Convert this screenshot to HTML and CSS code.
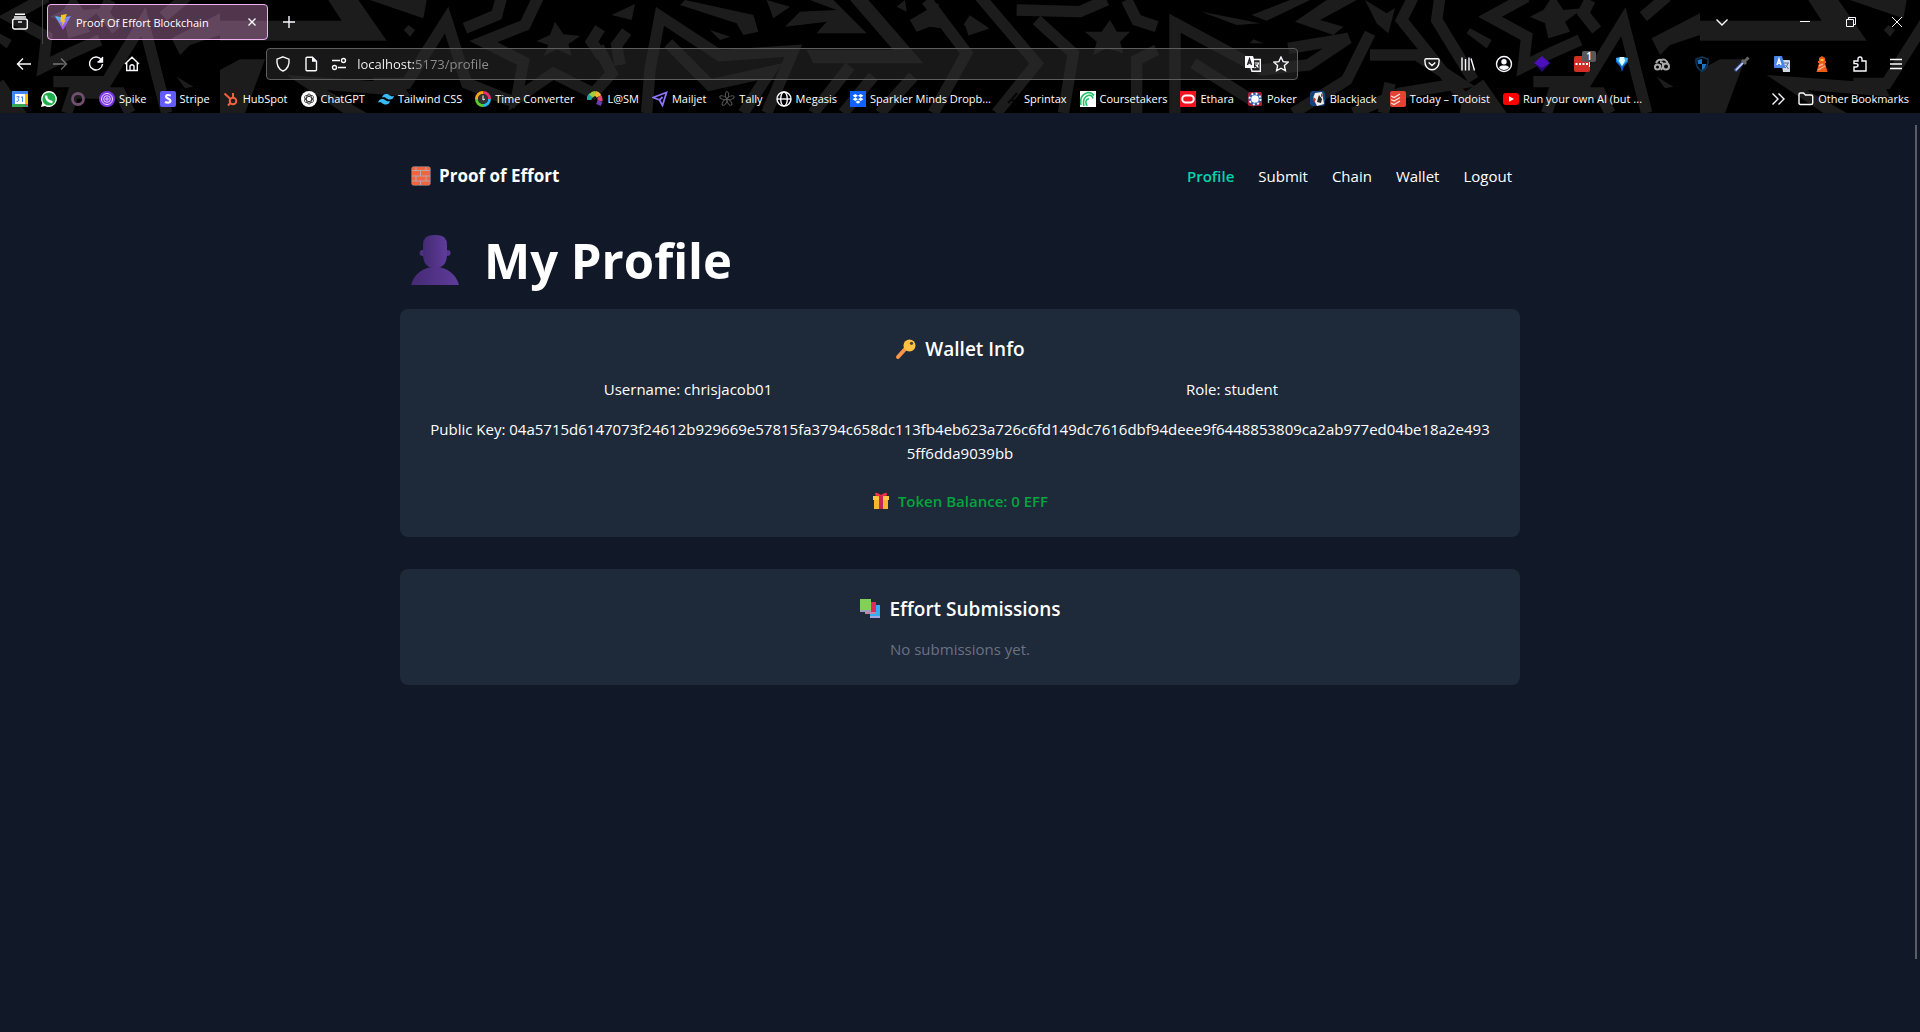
FILE: index.html
```html
<!DOCTYPE html>
<html lang="en">
<head>
<meta charset="utf-8">
<title>Proof Of Effort Blockchain</title>
<link rel="stylesheet" href="styles.css">
</head>
<body>
<div class="browser">
  <svg class="theme" viewBox="0 0 5760 339" preserveAspectRatio="xMinYMin slice" aria-hidden="true">
    <defs>
      <pattern id="stars" x="660" y="0" width="4440" height="600" patternUnits="userSpaceOnUse">
        <g transform="translate(-660 0)" fill="#1c1c1c">
          <path d="M985 0h90l85 122H660V62h365zM1110 0h170l-10 55zM1225 75l20 15-15 20-18-20zM660 210l60-32h75l-60 161h-75zM860 225l350 25 20 40-250-20 120 69h-70zM1835 45l70-33-10 48z"/>
          <path d="M1665 65l25 38 50 5-35 25 10 35-45-20-38 20 13-33-35-12 40-18z"/>
          <path d="M2055 0l205 45 15 50-45 10-20-35-170-55zM2130 90l60 20-30 10zM2300 0l70 20-50 35zM2355 80l45-45 110-5-80-30h70l100 100h-150l30-35zM2550 0h55l165 190h-330l-20-40h260zM2690 20l25-20 5 35zM2730 60l85-50 10 75-35-5-40 15z"/>
          <path d="M3330 60l20 35h40l-30 30 10 35-50-15-40 20 10-40-35-30h50zM3605 35l175 35-70 5zM3755 45L3870 0h60l-130 62zM3885 65l95-65h90l-110 60 70 20-30 25zM3750 130l10-12 30 12zM4095 0l65 40 25-15-20 75-35-30z"/>
          <path d="M4660-15l30 45 60-5-55 40 15 30-65 20-10-45-45-20 40-20zM4410 85l65 35-15 25-60-45zM4955 115L5100 40v65l-90 30-30 30zM4970 230l50 30-25 5zM4380 339l10-60 60-40 70 100z"/>
          <g fill="none" stroke="#1c1c1c" stroke-width="34">
            <path d="M1120 250h100L1340 60l60 190 150 60M1395 85l95-40 15-55M1620-20l-45 95-125 50 120 60-20 110 110-75 120 60 55-60-40-80"/>
            <path d="M1800 85l-25 40 30 45M1880 95l-30 40 10 60M1940 339l10-130 30-160 180 118 220-15-80 187M2005 130l125 125 180-40-80 124"/>
            <path d="M2440 339l110-140M2530 339l90-110M2640 339l100-110M2800 339l100-180L2780 0M2900 60l30 20-30 10M2940-10l170 200-120 149"/>
            <path d="M3050 30l190 5 80-35M3110 60l110 100-30 179M3380 0l30 60 60 20M3410 339V180l60-30"/>
            <path d="M3525 339V70l260 140 140-15 120-80-180 30M3580 190l190 120M4110 100l-70 140-160 99M4110 165l140 0 130 85-180 30-140 59M4170 250l-20 89"/>
            <path d="M4240-10l-35 70 80 100 140 179M4320-10l-10 70 110 180M4580-10l-110 60 110 60-10 90 80-40 90-40M4770 0l-20 40 40 50M4600 245h160L4870 65l70 274M4640 339l20-60h140l30 60M5000-10l-70 60"/>
          </g>
        </g>
      </pattern>
    </defs>
    <rect width="5760" height="339" fill="url(#stars)"/>
  </svg>

  <div class="tabs">
    <button class="tool view" aria-label="Firefox View"><svg width="18" height="18" viewBox="0 0 18 18"><path d="M4 1.200h10M3 4h12"/><rect x="1.700" y="6" width="14.600" height="10" rx="2"/><path d="M7 9h4"/></svg></button>
    <div class="tab">
      <svg width="16" height="16" viewBox="0 0 16 16"><defs><linearGradient id="v" x2=".6" y2="1"><stop stop-color="#41d1ff"/><stop offset="1" stop-color="#bd34fe"/></linearGradient></defs><path class="f" d="M0 2l8 14 8-14-8 1.500z" fill="url(#v)"/><path class="f" d="M12 0L6 1l-.5 7 2-.3L7 12l4-6-2 .4z" fill="#ffc31f"/></svg>
      <span class="title">Proof Of Effort Blockchain</span>
      <button class="close" aria-label="Close tab"><svg width="10" height="10" viewBox="0 0 10 10"><path d="M1.500 1.500l7 7M8.500 1.500l-7 7"/></svg></button>
    </div>
    <button class="tool" aria-label="New tab"><svg width="14" height="14" viewBox="0 0 14 14"><path d="M7 1v12M1 7h12"/></svg></button>
    <button class="tool all" aria-label="List all tabs"><svg width="14" height="14" viewBox="0 0 14 14"><path d="M1.500 4.500L7 10l5.500-5.500"/></svg></button>
    <button class="win" aria-label="Minimize"><svg width="12" height="12" viewBox="0 0 12 12"><path d="M1 5.500h10"/></svg></button>
    <button class="win" aria-label="Restore"><svg width="12" height="12" viewBox="0 0 12 12"><path d="M1.500 3.500h7v7h-7zM3.500 3V1.500h7v7H9"/></svg></button>
    <button class="win" aria-label="Close"><svg width="12" height="12" viewBox="0 0 12 12"><path d="M1 1l10 10M11 1L1 11"/></svg></button>
  </div>

  <div class="toolbar">
    <button class="tool" aria-label="Back"><svg width="16" height="16" viewBox="0 0 16 16"><path d="M15 8H1.500M7 2.500L1.500 8 7 13.500"/></svg></button>
    <button class="tool dim" aria-label="Forward"><svg width="16" height="16" viewBox="0 0 16 16"><path d="M1 8h13.500M9 2.500L14.500 8 9 13.500"/></svg></button>
    <button class="tool" aria-label="Reload"><svg width="16" height="16" viewBox="0 0 16 16"><path d="M13.500 4A6.500 6.500 0 1 0 14.500 8M14.500 1v5h-5"/><path class="solid" d="M15 .5V6H9.500z"/></svg></button>
    <button class="tool" aria-label="Home"><svg width="16" height="16" viewBox="0 0 16 16"><path d="M1 8l7-6.800L15 8M2.700 7v7.500h10.600V7M6 14.500V10q2-2.400 4 0v4.500"/></svg></button>
    <div class="spring"></div>
    <div class="address">
      <svg width="16" height="16" viewBox="0 0 16 16"><path d="M8 .8l6 2.400c.5 5-1.500 9.800-6 12-4.500-2.200-6.500-7-6-12z"/></svg>
      <svg width="16" height="16" viewBox="0 0 16 16"><path d="M9.500 1.200H4a1 1 0 0 0-1 1v11.600a1 1 0 0 0 1 1h8.500a1 1 0 0 0 1-1V5.200z"/><path class="solid" d="M9 .8l5 5H9z"/></svg>
      <svg width="16" height="16" viewBox="0 0 16 16"><path d="M1 4.500h8M7 11.500h8"/><circle cx="12.500" cy="4.500" r="2"/><circle cx="3.500" cy="11.500" r="2"/></svg>
      <input class="url" type="text" aria-label="Address" value="localhost:5173/profile">
      <button class="mini" aria-label="Translate page"><svg width="16" height="16" viewBox="0 0 16 16"><path class="solid" d="M0 0h8l1 3v9H0z"/><path d="M9 3.500h6.300v11.800H7L6 12"/><path d="M2.500 9l2-6 2 6M3 7h3" stroke="#222"/><path d="M9.500 7h4q-.5 3-4 5M10.500 8.500l3 3" stroke-width="1.200"/></svg></button>
      <button class="mini" aria-label="Bookmark this page"><svg width="16" height="16" viewBox="0 0 16 16"><path d="M8 1l2.100 4.600 5 .6-3.700 3.400 1 5L8 12.200l-4.400 2.400 1-5L.9 6.200l5-.6z"/></svg></button>
    </div>
    <div class="spring"></div>
    <button class="tool" aria-label="Pocket"><svg width="16" height="16" viewBox="0 0 16 16"><path d="M2.500 2.700h11q1.700 0 1.700 1.700C15.200 10 12.500 13.800 8 13.800S.8 10 .8 4.400q0-1.700 1.700-1.700zM4.700 6.500L8 9.500l3.300-3"/></svg></button>
    <button class="tool" aria-label="Library"><svg width="16" height="16" viewBox="0 0 16 16"><path d="M2 1.500v13M5.500 3v11.500M9 1.500v13M11 2.500l3.500 12"/></svg></button>
    <button class="tool" aria-label="Account"><svg width="18" height="18" viewBox="0 0 18 18"><circle cx="9" cy="9" r="7.500" /><circle class="solid" cx="9" cy="6.800" r="2.700"/><path class="solid" d="M4 13q.3-2.500 3-2.500h4q2.700 0 3 2.500-5 4-10 0z"/></svg></button>
    <button class="tool ext" aria-label="Purple extension"><svg width="16" height="16" viewBox="0 0 16 16"><path class="f" fill="#250a70" d="M0 7l8 9 8-9-8-3z"/><path class="f" fill="#4b10b8" d="M8 0l8 7-8 5-8-5z"/></svg></button>
    <button class="tool ext" aria-label="Password manager, 1"><svg width="16" height="16" viewBox="0 0 16 16"><rect class="f" fill="#d32d27" width="16" height="16" rx="2"/><path class="f" fill="#fff" d="M1.500 7h2v2h-2zM5 7h2v2H5zM8.500 7h2v2h-2zM12 7h2v2h-2zM15 5h1v6h-1z"/></svg><span class="badge">1</span></button>
    <button class="tool ext" aria-label="Gem extension"><svg width="16" height="16" viewBox="0 0 16 16"><path class="f" fill="#0b67c8" d="M2 2l6-1 6 1v4l-4.500 5L8 16l-1.500-5L2 6z"/><path class="f" fill="#37b4f5" d="M2 2l6-1 6 1-1 3-5 5-5-5z"/><path class="f" fill="#e4fbff" d="M6 1h4l1 4-3 5-3-5z"/></svg></button>
    <button class="tool ext" aria-label="Cloud extension"><svg width="16" height="16" viewBox="0 0 16 16"><g stroke="#aaa" stroke-width="2"><circle cx="3.500" cy="11" r="2.500"/><circle cx="12" cy="10.500" r="3"/><path d="M2 7q2-4 5-3 5-2 7 4M6 6q4 0 3 5l-2 3M6 9q1 1 0 3"/></g></svg></button>
    <button class="tool ext" aria-label="Shield extension"><svg width="16" height="16" viewBox="0 0 16 16"><path d="M8 1l6 2c.5 5-1.500 10-6 12.200C3.500 13 1.500 8 2 3z" stroke="#123a58"/><path class="f" fill="#1e75c6" d="M8 3v5H4L3.500 4zM8 8h4.500q-1 4-4.500 6z"/></svg></button>
    <button class="tool ext" aria-label="Colour picker"><svg width="16" height="16" viewBox="0 0 16 16"><path d="M1 15l8-8.500" stroke="#4a67c4" stroke-width="3"/><path d="M2 14l7-7" stroke="#cdd8f5"/><path d="M8 4l4 4M10 6l4.500-4.500" stroke="#666" stroke-width="3"/></svg></button>
    <button class="tool ext" aria-label="Translate"><svg width="16" height="16" viewBox="0 0 16 16"><path class="f" fill="#cfd8e4" d="M7 4h8a1 1 0 0 1 1 1v11H9z"/><path class="f" fill="#4a86e8" d="M1 0h7l3.500 12H1a1 1 0 0 1-1-1V1a1 1 0 0 1 1-1z"/><path d="M3 9l2-6 2 6M3.500 7.200h3"/><path d="M10 7h5M14 7q-1 4-3 5M11.500 9l3 4" stroke="#53709c" stroke-width="1"/></svg></button>
    <button class="tool ext" aria-label="Beacon"><svg width="16" height="16" viewBox="0 0 16 16"><path class="f" fill="#f05a1a" d="M5 2l3-2 3 2v3h1v2h-1l2.500 9h-11L5 7H4V5h1z"/><path class="f" fill="#ffc62e" d="M6.500 3h3v2h-3z"/><path d="M4 14l7-4M5 10l4-2" stroke="#ffb088"/></svg></button>
    <button class="tool" aria-label="Extensions"><svg width="16" height="16" viewBox="0 0 16 16"><path d="M2 5h4V3q0-2 2-2t2 2v2h4v10H2v-4h2q2 0 2-1.700T4 7.600H2z"/></svg></button>
    <button class="tool" aria-label="Menu"><svg width="14" height="14" viewBox="0 0 14 14"><path d="M1 2.500h12M1 7h12M1 11.500h12"/></svg></button>
  </div>

  <nav class="bookmarks" aria-label="Bookmarks">
    <a href="#" aria-label="Calendar"><svg width="16" height="16" viewBox="0 0 16 16"><path class="f" fill="#4285f4" d="M0 0h16v16H0z"/><path class="f" fill="#fbbc04" d="M13 3h3v10h-3z"/><path class="f" fill="#34a853" d="M0 13h13v3H0z"/><path class="f" fill="#ea4335" d="M13 13h3l-3 3z"/><path class="f" fill="#fff" d="M3 3h10v10H3z"/><path d="M4.500 5.700h2.700L6 7.700q2 1.300 0 2.600H4.500M9 6.500l1.500-.8v5.300" stroke="#4285f4" stroke-width="1"/></svg></a>
    <a href="#" aria-label="WhatsApp"><svg width="16" height="16" viewBox="0 0 16 16"><path class="f" fill="#fff" d="M8 0a8 8 0 1 1-4 15l-4 1 1.200-4A8 8 0 0 1 8 0z"/><circle class="f" cx="8" cy="8" r="6.600" fill="#1fae4b"/><path d="M5 4.500q0 5.500 6.500 6.800" stroke-width="2.400"/></svg></a>
    <a href="#" aria-label="Ring"><svg width="16" height="16" viewBox="0 0 16 16"><circle cx="8" cy="8" r="5.500" stroke="#70506e" stroke-width="2.800"/></svg></a>
    <a href="#"><svg width="16" height="16" viewBox="0 0 16 16"><circle class="f" cx="8" cy="8" r="8" fill="#7a35e8"/><g stroke="#e9d8ff" stroke-width="1"><circle cx="8" cy="8" r="5.500"/><circle cx="8" cy="8" r="3.300"/><circle cx="8" cy="8" r="1.200"/></g></svg>Spike</a>
    <a href="#"><svg width="16" height="16" viewBox="0 0 16 16"><rect class="f" width="16" height="16" rx="2" fill="#635bff"/><path d="M10.800 4.500Q6 3 6 5.800c0 2 4.500 1.700 4.500 4 0 3-5 1.500-5.500 1.200" stroke-width="2.200"/></svg>Stripe</a>
    <a href="#"><svg width="16" height="16" viewBox="0 0 16 16"><g stroke="#f0623e" stroke-width="2"><circle cx="10" cy="10" r="3.300"/><path d="M10 6V2M7.500 8L1.500 2.500M7.500 12L5 14.500"/></g></svg>HubSpot</a>
    <a href="#"><svg width="16" height="16" viewBox="0 0 16 16"><circle class="f" cx="8" cy="8" r="8" fill="#fff"/><g stroke="#222" stroke-width=".8"><ellipse cx="8" cy="8" rx="2.500" ry="5"/><ellipse cx="8" cy="8" rx="2.500" ry="5" transform="rotate(60 8 8)"/><ellipse cx="8" cy="8" rx="2.500" ry="5" transform="rotate(120 8 8)"/></g></svg>ChatGPT</a>
    <a href="#"><svg width="16" height="16" viewBox="0 0 16 16"><path class="f" fill="#38bdf8" d="M4 6.500Q5 3 8 3c4 0 4 3.500 8 2q-1 3.500-4 3.500C8 8.500 8 5 4 6.500zM0 11.500Q1 8 4 8c4 0 4 3.500 8 2q-1 3.500-4 3.500C4 13.500 4 10 0 11.500z"/></svg>Tailwind CSS</a>
    <a href="#"><svg width="16" height="16" viewBox="0 0 16 16"><g stroke-width="3"><path d="M8 1.500A6.500 6.500 0 0 1 14.500 8" stroke="#e82f6a"/><path d="M14.500 8A6.500 6.500 0 0 1 8 14.500" stroke="#20b8ed"/><path d="M8 14.500A6.500 6.500 0 0 1 1.500 8" stroke="#5ec92d"/><path d="M1.500 8A6.500 6.500 0 0 1 8 1.500" stroke="#f6a51c"/></g><circle class="f" cx="8" cy="8" r="5" fill="#333"/><path d="M8 4.500V9l2-1" stroke-width="1"/></svg>Time Converter</a>
    <a href="#"><svg width="16" height="16" viewBox="0 0 16 16"><g stroke-width="5"><path d="M2 9q0-3 2.500-5" stroke="#1da7a0"/><path d="M4 5q2-2.500 4-2.500" stroke="#a4cd39"/><path d="M8 2.500q3 .5 4 3" stroke="#f0b82d"/><path d="M12 5.500q1.500 2 1 4.500" stroke="#e14572"/><path d="M13 10l-1.500 4" stroke="#683db0"/></g></svg>L@SM</a>
    <a href="#"><svg width="16" height="16" viewBox="0 0 16 16"><path d="M1 6.500L14.500 1.500 10.500 14.500 7.500 9zM7.500 9l3-3" stroke="#8d72f5" stroke-width="1.800"/></svg>Mailjet</a>
    <a href="#"><svg width="16" height="16" viewBox="0 0 16 16"><g stroke="#555" stroke-width="1"><ellipse cx="8" cy="4" rx="1.700" ry="3.500"/><ellipse cx="8" cy="4" rx="1.700" ry="3.500" transform="rotate(72 8 8)"/><ellipse cx="8" cy="4" rx="1.700" ry="3.500" transform="rotate(144 8 8)"/><ellipse cx="8" cy="4" rx="1.700" ry="3.500" transform="rotate(216 8 8)"/><ellipse cx="8" cy="4" rx="1.700" ry="3.500" transform="rotate(288 8 8)"/></g></svg>Tally</a>
    <a href="#"><svg width="16" height="16" viewBox="0 0 16 16"><circle cx="8" cy="8" r="7"/><ellipse cx="8" cy="8" rx="3.300" ry="7"/><path d="M1 8h14"/></svg>Megasis</a>
    <a href="#"><svg width="16" height="16" viewBox="0 0 16 16"><path class="f" fill="#0f62fe" d="M0 0h16v16H0z"/><path class="f" fill="#fff" d="M5.300 3L8 4.700 5.300 6.400 2.600 4.700zM10.700 3l2.700 1.700-2.700 1.700L8 4.700zM5.300 6.600L8 8.300 5.300 10 2.600 8.300zM10.700 6.600l2.700 1.700-2.700 1.700L8 8.300zM8 9.500l2.500 1.500L8 12.700 5.500 11z"/></svg>Sparkler Minds Dropb...</a>
    <a href="#"><svg width="16" height="16" viewBox="0 0 16 16"><path d="M13 2L8 8l4 6M8 8l-4 4" stroke="#050505" stroke-width="2"/></svg>Sprintax</a>
    <a href="#"><svg width="16" height="16" viewBox="0 0 16 16"><path class="f" fill="#fff" d="M0 0h16v16H0z"/><g stroke="#27c36b" stroke-width="1.600"><path d="M1 14Q-1 4 8 1.500q4 0 6 3M4 15Q2 7 8 4.500q4-1 5 3M7 15Q4 9 9 7.500"/></g></svg>Coursetakers</a>
    <a href="#"><svg width="16" height="16" viewBox="0 0 16 16"><path class="f" fill="#f3131f" d="M0 0h16v16H0z"/><rect x="2.200" y="4.500" width="11.600" height="7" rx="3.500" stroke-width="2"/></svg>Ethara</a>
    <a href="#"><svg width="16" height="16" viewBox="0 0 16 16"><path class="f" fill="#a9202c" d="M2 1h12l1 2v11l-1 1H2l-1-1V3z"/><circle class="f" cx="8" cy="8" r="6.500" fill="#2f5fae"/><circle cx="8" cy="8" r="5.500" stroke-width="2" stroke-dasharray="1.800 2.520"/><circle class="f" cx="8" cy="8" r="3.800" fill="#fff"/></svg>Poker</a>
    <a href="#"><svg width="16" height="16" viewBox="0 0 16 16"><rect class="f" width="15" height="15" rx="3" fill="#15427d"/><path class="f" fill="#f2eee9" d="M5 2l7-1 2 12-7 2-4-8z"/><path class="f" fill="#222" d="M9 4l3 4-1 4-4-1 1-4z"/><path class="f" fill="#c53030" d="M3 6l3 2-2 4zM11 2l2 3-2 1z"/></svg>Blackjack</a>
    <a href="#"><svg width="16" height="16" viewBox="0 0 16 16"><rect class="f" width="16" height="16" rx="2" fill="#e44332"/><g stroke="#ffe8e4" stroke-width="1.300"><path d="M1 5l3 1.500 6-3.500M1 8.500L4 10l6-3.500M1 12l3 1.500 6-3.500"/></g></svg>Today – Todoist</a>
    <a href="#"><svg width="16" height="16" viewBox="0 0 16 16"><rect class="f" y="2" width="16" height="12" rx="3" fill="#f00"/><path class="f" fill="#fff" d="M6 5.300v5.400L11 8z"/></svg>Run your own AI (but ...</a>
    <button class="more" aria-label="Show more bookmarks"><svg width="14" height="14" viewBox="0 0 14 14"><path d="M1.500 1.500L7 7l-5.500 5.500M7.500 1.500L13 7l-5.500 5.500"/></svg></button>
    <a class="other" href="#"><svg width="16" height="16" viewBox="0 0 16 16"><path d="M1 3.500q0-1.500 1.500-1.500h3L7.500 4H13q1.700 0 1.700 1.500V12q0 1.500-1.700 1.500H2.500Q1 13.500 1 12z"/></svg>Other Bookmarks</a>
  </nav>
</div>

<div class="page">
  <div class="scroll-thumb"></div>
  <div class="container">
    <header class="site">
      <a class="brand" href="#"><svg width="20" height="20" viewBox="0 0 20 20"><rect x=".5" y=".5" width="19" height="19" rx="2" fill="#b9a6ac"/><g fill="#f2643d"><path d="M1 1h3.500v3H1zM5.500 1h9v3h-9zM15.500 1H19v3h-3.500zM1 5h8v4.500H1zM10 5h9v4.500h-9zM1 10.500h3.500v4H1zM5.500 10.500h9v4h-9zM15.500 10.500H19v4h-3.500zM1 15.500h8V19H1zM10 15.500h9V19h-9z"/></g></svg>Proof of Effort</a>
      <nav class="links"><a class="active" href="#">Profile</a><a href="#">Submit</a><a href="#">Chain</a><a href="#">Wallet</a><a href="#">Logout</a></nav>
    </header>
    <main>
      <h1><svg width="50" height="52" viewBox="0 0 50 52"><defs><linearGradient id="p" x2="1"><stop stop-color="#442a72"/><stop offset="1" stop-color="#5f3c9b"/></linearGradient></defs><g fill="url(#p)"><circle cx="12.500" cy="19" r="3"/><circle cx="37.500" cy="19" r="3"/><path d="M1 51C4 40 13 33 25 33s21 7 24 18z"/><path d="M13 11Q13 1 23 1h4q10 0 10 10v9q0 14-12 14T13 20z"/></g></svg>My Profile</h1>
      <section class="card">
        <h2><svg width="22" height="22" viewBox="0 0 22 22"><path d="M3 19l9-10" stroke="#f7954a" stroke-width="4" stroke-linecap="round"/><circle cx="14.500" cy="7.500" r="6" fill="#ffc143"/><circle cx="16.500" cy="5.300" r="1.600" fill="#4d4234"/></svg>Wallet Info</h2>
        <div class="info"><p>Username: chrisjacob01</p><p>Role: student</p><p class="key">Public Key: 04a5715d6147073f24612b929669e57815fa3794c658dc113fb4eb623a726c6fd149dc7616dbf94deee9f6448853809ca2ab977ed04be18a2e4935ff6dda9039bb</p></div>
        <p class="balance"><svg width="18" height="18" viewBox="0 0 18 18"><path d="M2 7h14v10H2z" fill="#f7b52f"/><path d="M1 4h16v4H1z" fill="#ffc83f"/><path d="M7 4h4v13H7z" fill="#c22757"/><path d="M9 4Q3 5 3 2t6 1q6-4 6-1T9 4z" fill="#ee3142"/></svg>Token Balance: 0 EFF</p>
      </section>
      <section class="card">
        <h2><svg width="22" height="22" viewBox="0 0 22 22"><path d="M11 7h10v13H11z" fill="#30aef0"/><path d="M11 18h10v2H11z" fill="#a7a6e5"/><path d="M6 4h11v12H6z" fill="#df2b59"/><path d="M6 14h11v2H6z" fill="#c583a8"/><path d="M1 1h11v13H1z" fill="#82d154"/><path d="M1 12h11v2H1z" fill="#9d9dbb"/></svg>Effort Submissions</h2>
        <p class="empty">No submissions yet.</p>
      </section>
    </main>
  </div>
</div>
</body>
</html>
```
FILE: styles.css
```css
* { box-sizing: border-box; }
body {
  margin: 0;
  min-height: 100vh;
  display: flex;
  flex-direction: column;
  background: #111827;
  color: #fff;
  font-family: "Open Sans", "Noto Sans", sans-serif;
}
a { color: inherit; text-decoration: none; }
button { border: 0; padding: 0; background: none; color: inherit; font: inherit; }
h1, h2, p { margin: 0; }

/* browser chrome */
.browser { position: relative; overflow: hidden; background: #000; font-size: 11px; }
.browser svg { flex: none; fill: none; stroke: #fbfbfe; stroke-width: 1.4; }
.browser .f { stroke: none; }
.browser .solid { fill: #fbfbfe; stroke: none; }
.browser .theme { position: absolute; left: 0; top: 0; width: 1920px; height: 113px; stroke: none; }
.tabs, .toolbar, .bookmarks { position: relative; display: flex; align-items: center; }
.tool { position: relative; width: 36px; height: 32px; flex: none; display: grid; place-items: center; }

.tabs { height: 44px; }
.view { width: 43px; height: 44px; padding-right: 2px; border-right: 1px solid #444; }
.tab {
  width: 221px; height: 36px; margin: 0 3px 0 4px; padding: 0 10px 0 7px;
  display: flex; align-items: center; gap: 5px;
  border: 1px solid #f0b0f2; border-radius: 4px;
  background: rgba(222, 147, 214, 0.36);
}
.title { flex: 1; }
.close { width: 10px; height: 10px; display: grid; }
.all { margin-left: auto; margin-right: 42px; }
.win { width: 46px; height: 44px; display: grid; place-items: center; }
.win svg { stroke-width: 1; }

.toolbar { height: 40px; padding: 0 6px; }
.dim { opacity: 0.4; }
.spring { flex: 118 1 0; }
.address {
  flex: 1030 1 0; height: 32px; padding: 0 8px;
  display: flex; align-items: center; gap: 12px;
  border: 1px solid #5d5d5f; border-radius: 4px;
  background: rgba(43, 43, 43, 0.55);
}
/* the host part of the address is brighter than the path */
.url {
  flex: 1; min-width: 0; height: 24px; margin-left: -2px; padding: 0; border: 0; outline: 0;
  font: inherit; font-size: 13px; color: transparent;
  background: linear-gradient(90deg, #fbfbfe 57px, #8f8f92 57px);
  background-clip: text; -webkit-background-clip: text;
}
.mini { width: 16px; height: 16px; display: grid; }
.ext { width: 40px; }
.badge {
  position: absolute; right: 6px; top: 3px; width: 14px; height: 11px;
  border-radius: 2px; background: #58585a; font-size: 10px; line-height: 11px; font-weight: 600;
}

.bookmarks { height: 29px; padding: 0 11px 0 12px; gap: 13px; white-space: nowrap; }
.bookmarks a { display: flex; align-items: center; gap: 4px; }
.more { margin-left: auto; width: 14px; height: 14px; display: grid; }

/* page */
.page { position: relative; flex: 1; padding: 32px 16px; }
.scroll-thumb { position: absolute; right: 3px; top: 12px; bottom: 73px; width: 2px; background: #5b5c66; }
.container { max-width: 1120px; margin: 0 auto; font-size: 15px; line-height: 24px; }
.site { height: 62px; padding: 0 8px 0 11px; display: flex; align-items: center; justify-content: space-between; }
.brand { display: flex; align-items: center; gap: 8px; font-size: 17px; font-weight: 700; }
.links { display: flex; gap: 24px; }
.active { color: #00d5b0; font-weight: 600; }
h1 {
  display: flex; align-items: center; gap: 24px;
  padding: 25px 10px 21px; font-size: 49px; line-height: 56px; font-weight: 700;
}
main { display: flex; flex-direction: column; }
.card { margin-bottom: 32px; padding: 24px; border-radius: 8px; background: #1e2939; text-align: center; }
h2, .balance { display: flex; align-items: center; justify-content: center; gap: 8px; }
h2 { margin-bottom: 12px; font-size: 19px; line-height: 32px; font-weight: 600; }
.info { display: grid; grid-template-columns: 1fr 1fr; gap: 16px; }
.key { grid-column: 1 / -1; padding: 0 4px; word-break: break-all; }
.balance { margin-top: 24px; color: #00a63e; font-weight: 600; }
.empty { color: #6a7282; }
```
